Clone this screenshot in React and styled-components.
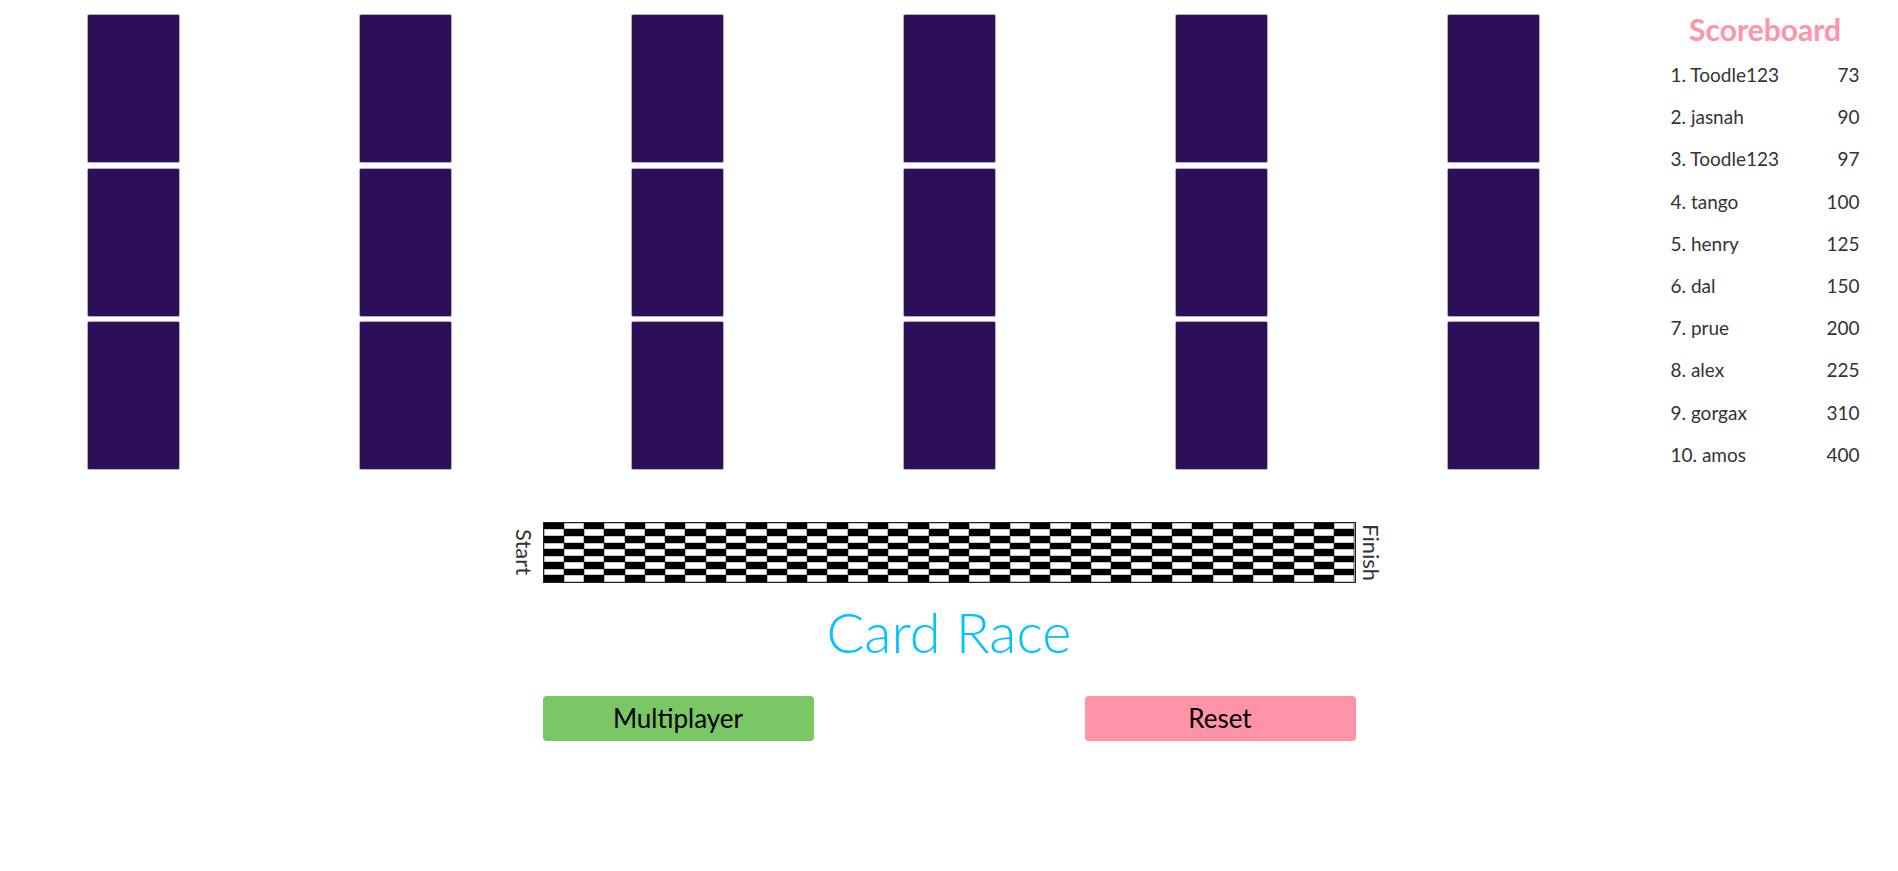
import React from 'react';
import styled, { createGlobalStyle } from 'styled-components';

const color_card = '#2c0f58';
const color_pink = '#ff93a7';
const color_green = '#79c765';
const color_sky = '#00c3ff';
const color_text = '#333333';

const scores = [
  ['Toodle123', 73],
  ['jasnah', 90],
  ['Toodle123', 97],
  ['tango', 100],
  ['henry', 125],
  ['dal', 150],
  ['prue', 200],
  ['alex', 225],
  ['gorgax', 310],
  ['amos', 400],
];

const COLS = 40;
const ROWS = 9;

const GlobalStyle = createGlobalStyle`
  body {
    margin: 0;
    background: #fff;
    font-family: Lato, 'Open Sans', sans-serif;
    color: ${color_text};
  }
`;

const App = () => {
  const cells = [];
  for (let r = 0; r < ROWS; r++) {
    for (let c = 0; c < COLS; c++) {
      cells.push(<Cell key={`${r}-${c}`} dark={(r + c) % 2 === 0} />);
    }
  }

  return (
    <Page>
      <GlobalStyle />
      <TopRow>
        <CardArea>
          {[0, 1, 2, 3, 4, 5].map((lane) => (
            <Lane key={lane}>
              <Card />
              <Card />
              <Card />
            </Lane>
          ))}
        </CardArea>
        <Scoreboard>
          <ScoreTitle>Scoreboard</ScoreTitle>
          <ScoreList>
            {scores.map(([name, score], i) => (
              <ScoreRow key={i}>
                <span>
                  {i + 1}. {name}
                </span>
                <span>{score}</span>
              </ScoreRow>
            ))}
          </ScoreList>
        </Scoreboard>
      </TopRow>

      <Track>
        <TrackLabel side="start">Start</TrackLabel>
        <Board>{cells}</Board>
        <TrackLabel side="finish">Finish</TrackLabel>
      </Track>

      <Title>Card Race</Title>

      <Buttons>
        <GameButton bg={color_green}>Multiplayer</GameButton>
        <span />
        <GameButton bg={color_pink}>Reset</GameButton>
      </Buttons>
    </Page>
  );
};

export default App;

const Page = styled.div`
  display: flex;
  flex-direction: column;
  min-height: 871px;
`;

const TopRow = styled.div`
  display: flex;
`;

const CardArea = styled.div`
  width: 1632px;
  display: flex;
  gap: 179px;
  padding: 14px 0 0 87px;
  box-sizing: border-box;
`;

const Lane = styled.div`
  display: flex;
  flex-direction: column;
  gap: 4.5px;
`;

const Card = styled.div`
  width: 93px;
  height: 149px;
  box-sizing: border-box;
  background: ${color_card};
  border: 1px solid #b7aec4;
  border-radius: 2px;
`;

const Scoreboard = styled.div`
  flex: 1;
  display: flex;
  flex-direction: column;
  align-items: center;
  padding-top: 12px;
`;

const ScoreTitle = styled.h2`
  margin: 0 0 8px;
  font-size: 30px;
  line-height: 34px;
  font-weight: 700;
  color: ${color_pink};
`;

const ScoreList = styled.ol`
  list-style: none;
  margin: 0;
  padding: 0;
  width: 189px;
`;

const ScoreRow = styled.li`
  display: flex;
  justify-content: space-between;
  height: 42.2px;
  line-height: 42.2px;
  font-size: 19px;
`;

const Track = styled.div`
  display: grid;
  grid-template-columns: 1fr auto 1fr;
  align-items: center;
  margin-top: 46px;
`;

const TrackLabel = styled.div`
  writing-mode: vertical-rl;
  font-size: 22px;
  line-height: 22px;
  color: ${color_text};
  justify-self: ${(props) => (props.side === 'start' ? 'end' : 'start')};
  margin: ${(props) => (props.side === 'start' ? '0 8px 0 0' : '0 0 0 4px')};
`;

const Board = styled.div`
  width: 813px;
  height: 61px;
  box-sizing: border-box;
  display: grid;
  grid-template-columns: repeat(${COLS}, 1fr);
  grid-template-rows: repeat(${ROWS}, 1fr);
  border: 1px solid #222;
  background: #999;
`;

const Cell = styled.div`
  background: ${(props) => (props.dark ? '#000' : '#fff')};
  box-shadow: ${(props) => (props.dark ? 'none' : 'inset 0 0 0 0.6px #8a8a8a')};
`;

const Title = styled.h1`
  margin: 14px 0 0;
  text-align: center;
  font-size: 56px;
  line-height: 70px;
  font-weight: 300;
  color: ${color_sky};
`;

const Buttons = styled.div`
  align-self: center;
  width: 813px;
  display: grid;
  grid-template-columns: repeat(3, 1fr);
  margin-top: 29px;
`;

const GameButton = styled.button`
  height: 45px;
  border: none;
  border-radius: 4px;
  background: ${(props) => props.bg};
  color: #000;
  font-family: Lato, 'Open Sans', sans-serif;
  font-size: 26px;
  cursor: pointer;
  outline: none;
`;
